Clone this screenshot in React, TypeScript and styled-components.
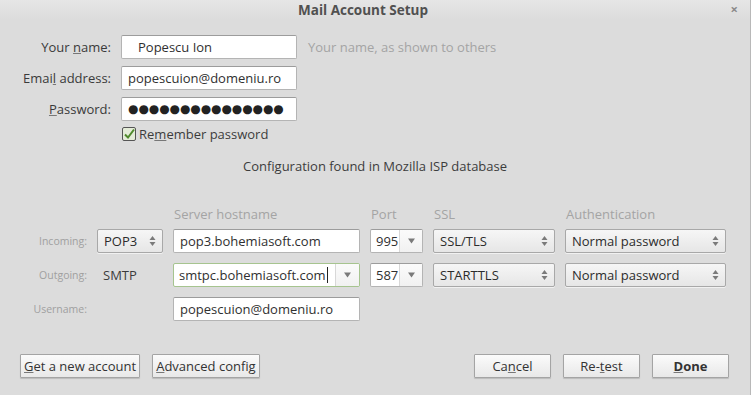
import styled, { createGlobalStyle, css } from 'styled-components';

const GlobalStyle = createGlobalStyle`
  html, body {
    margin: 0;
    padding: 0;
    background: #dcdcdc;
  }
  body {
    font-family: "Open Sans", "Liberation Sans", sans-serif;
    font-size: 13px;
    line-height: 17px;
    color: #3c3c3c;
  }
`;

const Window = styled.div`
  width: 751px;
  height: 395px;
  display: flex;
  flex-direction: column;
  background: #dcdcdc;
  box-sizing: border-box;
  border-right: 1px solid #b8b8b8;
  overflow: hidden;
`;

const TitleBar = styled.div`
  height: 20px;
  flex: none;
  position: relative;
  display: flex;
  align-items: center;
  justify-content: center;
  padding-right: 24px;
  background: linear-gradient(#e6e6e6, #dcdcdc);
  font-weight: bold;
  font-size: 13.5px;
  color: #505050;
`;

const Close = styled.span`
  position: absolute;
  right: 12px;
  top: 1px;
  font-size: 13px;
  color: #8a8a8a;
  font-weight: bold;
`;

const Content = styled.div`
  flex: 1;
  display: flex;
  flex-direction: column;
  padding: 15px 0 0;
`;

const Identity = styled.div`
  display: grid;
  grid-template-columns: 111px 176px auto;
  column-gap: 10px;
  row-gap: 7px;
  align-items: center;
`;

const Label = styled.label`
  text-align: right;
  color: #3a3a3a;
`;

const Hint = styled.span`
  color: #a4a4a4;
  padding-left: 1px;
`;

const fieldBox = css`
  box-sizing: border-box;
  height: 24px;
  background: #fff;
  border: 1px solid #b4b4b4;
  border-top-color: #9c9c9c;
  border-radius: 2px;
  display: flex;
  align-items: center;
  color: #303030;
  white-space: nowrap;
  overflow: hidden;
`;

const Field = styled.div<{ $indent?: number }>`
  ${fieldBox};
  padding-left: ${(p) => p.$indent ?? 6}px;
`;

const Dots = styled.span`
  font-family: "DejaVu Sans", sans-serif;
  font-size: 11.9px;
  color: #222;
`;

const CheckRow = styled.div`
  display: flex;
  align-items: center;
  gap: 2px;
  margin: 5px 0 0 122px;
`;

const Notice = styled.div`
  text-align: center;
  margin-top: 15px;
`;

const Servers = styled.div`
  display: grid;
  grid-template-columns: 87px 66px 187px 53px 122px 161px;
  grid-template-rows: 21px repeat(3, 24px);
  column-gap: 10px;
  row-gap: 10px;
  align-items: center;
  margin-top: 23px;
`;

const Head = styled.div`
  color: #a4a4a4;
  padding-left: 1px;
  align-self: end;
  margin-bottom: -4px;
`;

const RowLabel = styled.div`
  text-align: right;
  font-size: 10.5px;
  color: #a0a0a0;
`;

const Plain = styled.div`
  padding-left: 6px;
`;

const Select = styled.div`
  box-sizing: border-box;
  height: 24px;
  display: flex;
  align-items: center;
  justify-content: space-between;
  padding: 0 6px 0 6px;
  background: linear-gradient(#f6f6f6, #e6e6e6);
  border: 1px solid #a8a8a8;
  border-radius: 2px;
  box-shadow: 0 1px 0 rgba(255, 255, 255, 0.6);
  color: #2c2c2c;
`;

const Combo = styled.div<{ $focus?: boolean }>`
  ${fieldBox};
  padding: 0;
  ${(p) => p.$focus && css`border-color: #a6c48f; border-top-color: #a6c48f;`}
`;

const ComboText = styled.span`
  flex: 1;
  padding-left: 5px;
  display: flex;
  align-items: center;
`;

const Caret = styled.span`
  width: 1px;
  height: 16px;
  background: #222;
  margin-left: 1px;
`;

const ComboButton = styled.span<{ $w: number }>`
  flex: none;
  width: ${(p) => p.$w}px;
  align-self: stretch;
  display: flex;
  align-items: center;
  justify-content: center;
  border-left: 1px solid #d8d8d8;
  background: linear-gradient(#fbfbfb, #f1f1f1);
`;

const Footer = styled.div`
  margin-top: auto;
  margin-bottom: 17px;
  display: flex;
  justify-content: space-between;
  padding: 0 21px 0 20px;
`;

const ButtonGroup = styled.div`
  display: flex;
  gap: 12px;
`;

const Button = styled.button<{ $w?: number; $bold?: boolean }>`
  box-sizing: border-box;
  height: 24px;
  ${(p) => (p.$w ? `width: ${p.$w}px;` : 'padding: 0 3px;')}
  font-family: inherit;
  font-size: 13px;
  font-weight: ${(p) => (p.$bold ? 'bold' : 'normal')};
  color: #333;
  background: linear-gradient(#fbfbfb, #e8e8e8);
  border: 1px solid #a4a4a4;
  border-radius: 1px;
  box-shadow: 0 1px 1px rgba(0, 0, 0, 0.15);
`;

const U = styled.u`
  text-decoration-color: #777;
`;

function Arrows() {
  return (
    <svg width="7" height="12" viewBox="0 0 7 12">
      <path d="M3.5 1 L6.5 5 L0.5 5 Z" fill="#7a7a7a" />
      <path d="M3.5 11 L6.5 7 L0.5 7 Z" fill="#7a7a7a" />
    </svg>
  );
}

function Down() {
  return (
    <svg width="7" height="6" viewBox="0 0 7 6">
      <path d="M0 0.5 L7 0.5 L3.5 5.5 Z" fill="#7a7a7a" />
    </svg>
  );
}

function Check() {
  return (
    <svg width="15" height="15" viewBox="0 0 15 15">
      <rect x="0.5" y="0.5" width="13" height="13" rx="1.5" fill="#e4ecd8" stroke="#555" />
      <path d="M3 7.5 L6 10.5 L12 2.5" fill="none" stroke="#4f8a2c" strokeWidth="2" />
    </svg>
  );
}

export default function App() {
  return (
    <>
      <GlobalStyle />
      <Window>
        <TitleBar>
          Mail Account Setup
          <Close>×</Close>
        </TitleBar>
        <Content>
          <Identity>
            <Label>Your <U>n</U>ame:</Label>
            <Field $indent={16}>Popescu Ion</Field>
            <Hint>Your name, as shown to others</Hint>
            <Label>Emai<U>l</U> address:</Label>
            <Field>popescuion@domeniu.ro</Field>
            <span />
            <Label><U>P</U>assword:</Label>
            <Field><Dots>●●●●●●●●●●●●●●●</Dots></Field>
            <span />
          </Identity>
          <CheckRow>
            <Check />
            <span>Re<U>m</U>ember password</span>
          </CheckRow>
          <Notice>Configuration found in Mozilla ISP database</Notice>
          <Servers>
            <span />
            <span />
            <Head>Server hostname</Head>
            <Head>Port</Head>
            <Head>SSL</Head>
            <Head>Authentication</Head>

            <RowLabel>Incoming:</RowLabel>
            <Select>POP3<Arrows /></Select>
            <Field>pop3.bohemiasoft.com</Field>
            <Combo><ComboText>995</ComboText><ComboButton $w={22}><Down /></ComboButton></Combo>
            <Select>SSL/TLS<Arrows /></Select>
            <Select>Normal password<Arrows /></Select>

            <RowLabel>Outgoing:</RowLabel>
            <Plain>SMTP</Plain>
            <Combo $focus>
              <ComboText>smtpc.bohemiasoft.com<Caret /></ComboText>
              <ComboButton $w={23}><Down /></ComboButton>
            </Combo>
            <Combo><ComboText>587</ComboText><ComboButton $w={22}><Down /></ComboButton></Combo>
            <Select>STARTTLS<Arrows /></Select>
            <Select>Normal password<Arrows /></Select>

            <RowLabel>Username:</RowLabel>
            <span />
            <Field>popescuion@domeniu.ro</Field>
          </Servers>
          <Footer>
            <ButtonGroup>
              <Button><U>G</U>et a new account</Button>
              <Button><U>A</U>dvanced config</Button>
            </ButtonGroup>
            <ButtonGroup>
              <Button $w={77}>Ca<U>n</U>cel</Button>
              <Button $w={77}>Re-<U>t</U>est</Button>
              <Button $w={77} $bold><U>D</U>one</Button>
            </ButtonGroup>
          </Footer>
        </Content>
      </Window>
    </>
  );
}
